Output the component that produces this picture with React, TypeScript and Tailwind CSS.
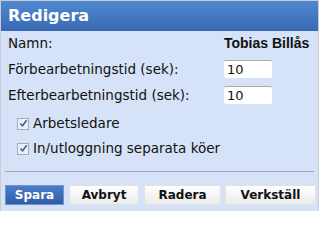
import React from 'react';

const Check: React.FC<{ label: string }> = ({ label }) => (
  <label className="flex items-center h-[25px] pl-[9px] gap-[4px]">
    <span className="w-[12px] h-[12px] border border-[#a5abb3] bg-[#eef0f4] flex items-center justify-center">
      <svg viewBox="0 0 10 10" className="w-[9px] h-[9px]">
        <path d="M1.5 5 L4 7.5 L8.5 1.5" fill="none" stroke="#3d5fb8" strokeWidth="1.8" />
      </svg>
    </span>
    <span>{label}</span>
  </label>
);

const App: React.FC = () => {
  return (
    <div
      className="w-[319px] h-[211px] bg-[#d5e2f7] border-t border-l border-r border-[#c9ccd2] text-[13.5px] text-[#111] overflow-hidden"
      style={{ fontFamily: '"DejaVu Sans", Verdana, sans-serif' }}
    >
      <div className="h-[30px] bg-gradient-to-b from-[#5089d3] to-[#3a69b3] flex items-center px-[7px]">
        <h1 className="text-white font-bold text-[16px] leading-none">Redigera</h1>
      </div>

      <div className="px-[7px]">
        <div className="grid grid-cols-[216px_1fr] items-center">
          <div className="h-[25px] flex items-center">Namn:</div>
          <div className="h-[25px] flex items-center font-bold whitespace-nowrap text-[14px] font-['Liberation_Sans',sans-serif]">
            Tobias Billås
          </div>
          <div className="h-[26px] flex items-center">Förbearbetningstid (sek):</div>
          <div className="h-[26px] flex items-center">
            <input
              defaultValue="10"
              className="w-[48px] h-[18px] bg-white rounded-[2px] border-t border-[#a8acb2] px-[3px] text-[13px] outline-none"
            />
          </div>
          <div className="h-[26px] flex items-center">Efterbearbetningstid (sek):</div>
          <div className="h-[26px] flex items-center">
            <input
              defaultValue="10"
              className="w-[48px] h-[18px] bg-white rounded-[2px] border-t border-[#a8acb2] px-[3px] text-[13px] outline-none"
            />
          </div>
        </div>

        <div className="mt-[3px]">
          <Check label="Arbetsledare" />
          <Check label="In/utloggning separata köer" />
        </div>
      </div>

      <div className="mx-[4px] mt-[10px] border-t border-[#9ea4ad]" />

      <div className="flex pl-[4px] mt-[13px] text-[12px] font-bold">
        <button className="w-[59px] h-[20px] bg-gradient-to-b from-[#4a7dc9] to-[#2f5ea8] border border-[#6f95cf] text-white">
          Spara
        </button>
        <button className="ml-[5px] w-[70px] h-[20px] bg-gradient-to-b from-[#ffffff] to-[#ebebeb] border border-[#e2e2e2]">
          Avbryt
        </button>
        <button className="ml-[5px] w-[77px] h-[20px] bg-gradient-to-b from-[#ffffff] to-[#ebebeb] border border-[#e2e2e2]">
          Radera
        </button>
        <button className="ml-[4px] w-[91px] h-[20px] bg-gradient-to-b from-[#ffffff] to-[#ebebeb] border border-[#e2e2e2]">
          Verkställ
        </button>
      </div>
    </div>
  );
};

export default App;
